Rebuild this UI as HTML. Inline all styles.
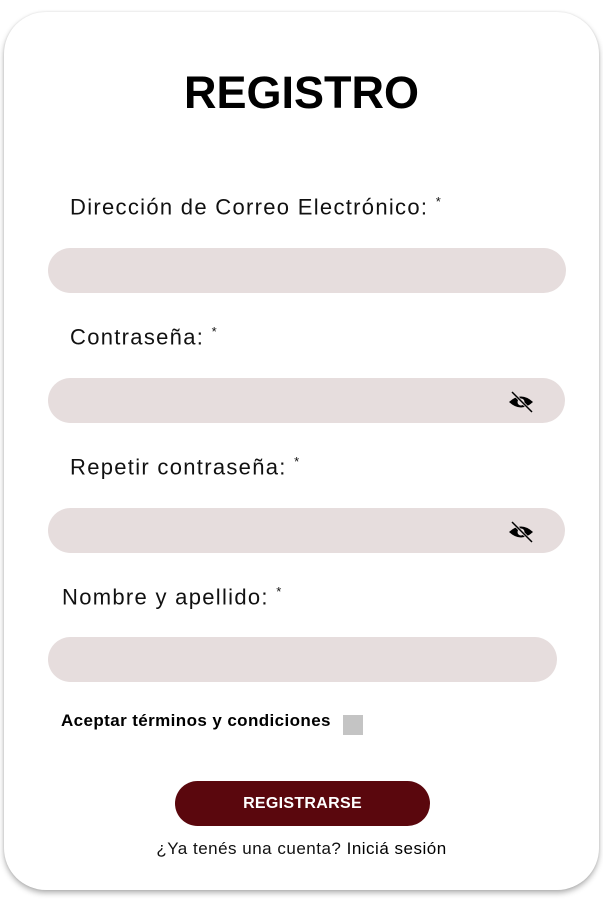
<!DOCTYPE html>
<html><head><meta charset="utf-8"><style>
body{margin:0;width:603px;height:899px;background:#fff;font-family:"Liberation Sans",sans-serif;position:relative;overflow:hidden}
.card{position:absolute;left:4px;top:12px;width:595px;height:878px;border-radius:42px;background:#fff;box-shadow:0 3px 6px rgba(0,0,0,.3),0 0 2px rgba(0,0,0,.1)}
.a{position:absolute;white-space:nowrap}
h1{position:absolute;left:0;width:603px;text-align:center;top:65px;margin:0;font-size:45px;font-weight:bold;line-height:56px;color:#000}
.lbl{font-size:22px;color:#111;line-height:26px;letter-spacing:1.3px}
.in{position:absolute;background:#e6dddd;border-radius:23px;height:45px}
.eye{position:absolute;right:30px;top:13px}
</style></head><body>
<div class="card"></div>
<h1>REGISTRO</h1>
<div class="a lbl" style="left:70px;top:189px">Dirección de Correo Electrónico: <sup style="font-size:13px">*</sup></div>
<div class="in" style="left:48px;top:248px;width:518px"></div>
<div class="a lbl" style="left:70px;top:319px">Contraseña: <sup style="font-size:13px">*</sup></div>
<div class="in" style="left:48px;top:378px;width:517px"><svg class="eye" width="28" height="22" viewBox="0 0 28 22"><path d="M2 11 Q14 0 26 11 Q14 22 2 11Z" fill="#000"/><circle cx="14" cy="11" r="3.5" fill="#e6dddd"/><path d="M5 1 L25 21" stroke="#e6dddd" stroke-width="3"/><path d="M5 1 L25 21" stroke="#000" stroke-width="1.5"/></svg></div>
<div class="a lbl" style="left:70px;top:449px">Repetir contraseña: <sup style="font-size:13px">*</sup></div>
<div class="in" style="left:48px;top:508px;width:517px"><svg class="eye" width="28" height="22" viewBox="0 0 28 22"><path d="M2 11 Q14 0 26 11 Q14 22 2 11Z" fill="#000"/><circle cx="14" cy="11" r="3.5" fill="#e6dddd"/><path d="M5 1 L25 21" stroke="#e6dddd" stroke-width="3"/><path d="M5 1 L25 21" stroke="#000" stroke-width="1.5"/></svg></div>
<div class="a lbl" style="left:62px;top:579px">Nombre y apellido: <sup style="font-size:13px">*</sup></div>
<div class="in" style="left:48px;top:637px;width:509px"></div>
<div class="a" style="left:61px;top:711px;font-size:17px;font-weight:bold;color:#000;letter-spacing:.4px">Aceptar términos y condiciones</div>
<div class="a" style="left:343px;top:715px;width:20px;height:20px;background:#c4c4c4"></div>
<div class="a" style="left:175px;top:781px;width:255px;height:45px;border-radius:23px;background:#5a070d;color:#fff;font-weight:bold;font-size:16px;line-height:45px;text-align:center;letter-spacing:.3px">REGISTRARSE</div>
<div class="a" style="left:0;width:603px;text-align:center;top:839px;font-size:17px;color:#111;letter-spacing:.5px">¿Ya tenés una cuenta? <span style="color:#000">Iniciá sesión</span></div>
</body></html>
